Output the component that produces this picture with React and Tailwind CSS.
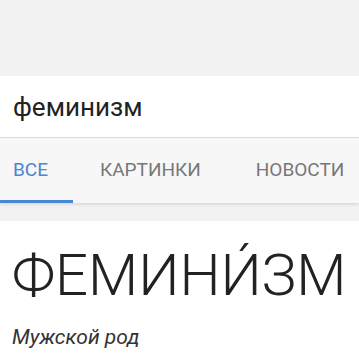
export default function App() {
  return (
    <div className="w-[359px] h-[359px] overflow-hidden bg-[#f2f2f2] font-['Roboto',sans-serif]">
      <div className="h-[76px]" />
      <div className="h-[62px] bg-white border-b border-[#e2e2e2] flex items-center pl-[13px] pt-[2px]">
        <span className="text-[26px] text-[#222]">феминизм</span>
      </div>
      <div className="h-[65px] bg-[#f7f7f7] flex items-stretch shadow-[0_1px_3px_rgba(0,0,0,0.15)]">
        <div className="w-[73px] pl-[13px] flex items-center border-b-[3px] border-[#4a86d4] pt-[3px] text-[19px] text-[#4a86d4]">
          ВСЕ
        </div>
        <div className="ml-[27px] flex items-center text-[19px] text-[#777]">КАРТИНКИ</div>
        <div className="ml-[55px] flex items-center text-[19px] text-[#777]">НОВОСТИ</div>
      </div>
      <div className="h-[18px]" />
      <div className="bg-white h-[200px] pl-[12px] pt-[25px]">
        <div className="text-[58px] font-light text-[#222] leading-none">ФЕМИНИ́ЗМ</div>
        <div className="mt-[18px] text-[21px] italic text-[#333]">Мужской род</div>
      </div>
    </div>
  )
}
